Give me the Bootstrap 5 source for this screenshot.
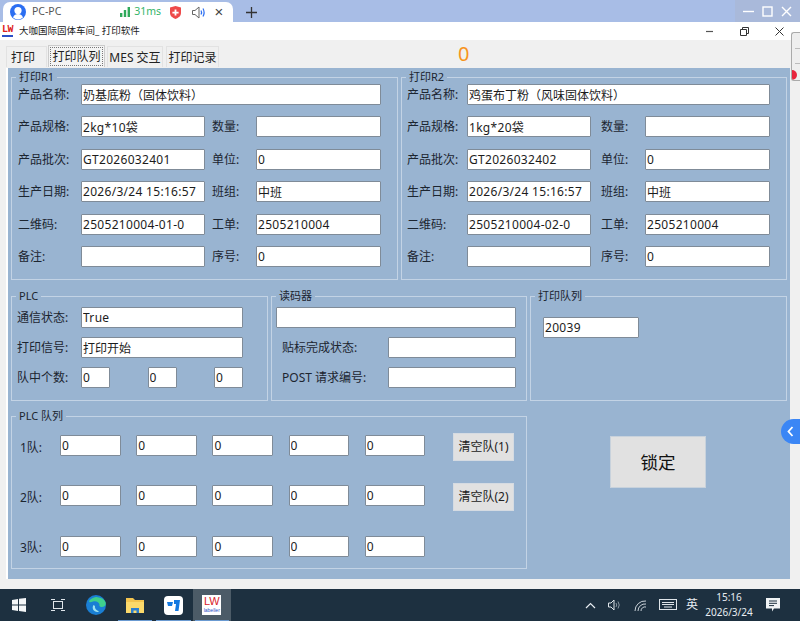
<!DOCTYPE html>
<html lang="zh-CN">

<head>
    <meta charset="UTF-8">
    <meta name="viewport" content="width=device-width, initial-scale=1.0">
    <title>大咖国际固体车间_ 打印软件</title>
    <link href="https://cdn.jsdelivr.net/npm/bootstrap@5.3.2/dist/css/bootstrap.min.css" rel="stylesheet">
    <style>
        html, body { height: 100%; overflow: hidden; }
        body {
            font-family: "Noto Sans", "Noto Sans CJK SC", sans-serif;
            font-size: 12px;
            color: #1c2530;
            background: #f0f0f0;
        }
        .shell { height: 621px; width: 800px; position: relative; }

        /* remote desktop tab bar */
        .rdp-bar { height: 22px; background: #a8bde6; padding: 2px 0 0 3px; }
        .rdp-tab { width: 230px; height: 20px; background: #fff; border-radius: 7px 7px 0 0; padding: 0 9px 0 7px; color: #555; font-size: 10.5px; }
        .rdp-ms { color: #35b56a; font-size: 10.5px; margin-left: 4px; }
        .rdp-shield { margin-left: 9px; }
        .rdp-speaker { margin-left: 11px; }
        .rdp-close { width: 10px; margin-left: 8px; font-family: "Liberation Sans", sans-serif; font-size: 15px; line-height: 18px; color: #444; text-align: center; }
        .rdp-plus { margin-left: 12px; }
        .rdp-ctrl { margin-left: auto; margin-top: -2px; width: 65px; height: 22px; background: #a9b9da; }

        /* app title */
        .app-title { height: 18px; background: #fff; font-size: 9.5px; color: #222; padding-right: 16px; }
        .lw-small { width: 15px; margin: 0 2px 0 2px; font-family: "Liberation Mono", monospace; font-size: 10px; font-weight: 700; line-height: 9px; color: #d22; letter-spacing: -.6px; }
        .lw-small::after { content: ""; display: block; width: 11px; height: 2px; margin-top: 1px; background: #2b4fc7; }
        .title-btns { gap: 26px; }

        /* tabs */
        .tab-strip { height: 28px; padding: 6px 0 0 6px; background: #f0f0f0; }
        .tab-strip .nav-link {
            height: 21px; padding: 0; margin-right: 2px;
            font-size: 12px; line-height: 21px; color: #222; text-align: center;
            background: #f0f0f0; border: 1px solid #e2e2e2; border-bottom: 0; border-radius: 0;
        }
        .tab-strip .nav-link.tab-one { width: 41px; margin-right: 1px; padding-left: 4px; text-align: left; }
        .tab-two { width: 57px; }
        .tab-strip .nav-link.tab-three { width: 56px; margin-right: 3px; }
        .tab-four { width: 53px; }
        .tab-strip .nav-link.active { height: 22px; margin-top: -1px; padding: 0 1px; color: #222; background: #f4f4f4; border-color: #ccc; }
        .tab-focus { display: block; line-height: 17px; margin-top: 1px; border: 1px dotted #777; }
        .counter { position: absolute; left: 458px; top: 41px; font-size: 20px; color: #f7941d; line-height: 26px; }

        /* main panel */
        .main-wrap { height: 511px; padding: 0 10px 0 8px; background: #f0f0f0; }
        .main-panel { height: 100%; background: #99b4d1; padding: 2px 3px 0 3px; box-shadow: -2px 0 0 #fff, 0 2px 0 #fff; }
        .grp { border: 1px solid #c3d3e5; min-width: 0; margin: 0; }
        .grp legend { float: none; width: auto; margin: 0 0 0 4px; padding: 0 3px; font-size: 11px; line-height: 14px; color: #1c2530; }
        .top-row { display: grid; grid-template-columns: 387px 386px; gap: 3px; height: 210px; }
        .mid-row { display: grid; grid-template-columns: 257px 256px 257px; gap: 3px; height: 112px; margin-top: 9px; }
        .low-row { display: grid; grid-template-columns: 516px 1fr; gap: 3px; height: 160px; margin-top: 8px; }

        .fld {
            height: 21px; padding: 0 1px; font-size: 12px; line-height: 19px; color: #1c1c1c;
            background: #fff; border: 1px solid #7f8b98; border-radius: 1px;
            font-family: "Noto Sans", "Noto Sans CJK SC", sans-serif;
        }
        .fld-lat { letter-spacing: .3px; }
        .lbl { font-size: 12px; line-height: 21px; white-space: nowrap; color: #1c2530; }

        .print-form {
            display: grid; grid-template-columns: 63px 124px 51px 125px;
            grid-auto-rows: 21px; row-gap: 11.4px; padding-left: 6px;
        }
        .print-form.second { grid-template-columns: 60px 124px 54px 125px; padding-left: 5px; }
        .wide { grid-column: 2 / span 3; }
        .second-lbl { padding-left: 7px; }
        .second .second-lbl { padding-left: 10px; }

        .plc-form { display: grid; grid-template-columns: 64px 1fr; grid-auto-rows: 21px; row-gap: 9px; padding: 4px 24px 0 5px; }
        .count-row { display: flex; justify-content: space-between; }
        .count-row .fld { width: 29px; }
        .reader-form { display: grid; grid-template-columns: 112px 128px; grid-auto-rows: 21px; row-gap: 9px; padding: 4px 0 0 4px; }
        .reader-form .lbl { padding-left: 6px; }
        .reader-form .wide-reader { grid-column: 1 / span 2; }
        .queue-box { width: 96px; margin: 14px 0 0 12px; }

        .plc-queue { display: grid; grid-template-columns: 40px 393px 61px; grid-auto-rows: 28px; row-gap: 22.4px; padding: 10px 0 0 8px; align-items: start; }
        .plc-queue .lbl { align-self: center; }
        .q-gap { display: flex; gap: 15.7px; margin-top: 2px; }
        .q-gap .fld { width: 60.5px; flex: none; }
        .clear-btn {
            width: 61px; height: 28px; padding: 0;
            font-size: 12px; color: #222; border-radius: 0;
            background: #e1e1e1; border: 1px solid #d5dbe2;
        }
        .lock-area { padding: 27px 0 0 80px; }
        .lock-btn { width: 96px; height: 52px; padding: 0; font-size: 17.5px; color: #111; background: #e1e1e1; border: 1px solid #c8d2dc; border-radius: 0; }

        /* taskbar */
        .task-strip { height: 10px; background: #f0f0f0; }
        .taskbar { height: 32px; background: #1d3040; color: #e8edf2; }
        .slot { width: 38.5px; height: 32px; position: relative; flex: none; }
        .slot.open::after { content: ""; position: absolute; left: 2px; right: 2px; bottom: 0; height: 1px; background: #6b9bd2; }
        .slot.active { background: #4c5b67; }
        .lw-logo { width: 19px; height: 20px; background: #fff; text-align: center; line-height: 1; font-family: "Liberation Sans", sans-serif; }
        .lw-logo b { display: block; font-size: 11px; color: #d9222a; line-height: 12px; font-weight: 400; }
        .lw-logo i { display: block; font-size: 5px; color: #2b4fc7; font-style: normal; line-height: 6px; }
        .tray { margin-left: auto; padding-right: 20px; }
        .tray-wide { margin-right: 12px; }
        .tray-mid { margin-right: 10px; }
        .tray-clock { width: 52px; margin: 0 11px 0 5px; font-size: 10px; line-height: 15px; text-align: center; }
        .tray-ime { margin-left: 9px; font-size: 12px; }

        /* overlays from the remote tool */
        .side-strip { position: absolute; right: 0; top: 32px; width: 9px; height: 49px; background: #eee; border: 1px solid #aaa; border-right: 0; border-radius: 3px 0 0 3px; overflow: hidden; }
        .side-dot { position: absolute; left: 0; top: 37px; width: 5px; height: 10px; background: #e8243c; border-radius: 0 5px 5px 0; }
        .side-lines { position: absolute; left: 3px; top: 15px; width: 5px; height: 16px; border-top: 1px solid #bbb; border-bottom: 1px solid #bbb; }
        .side-handle { position: absolute; right: 0; top: 419px; width: 19px; height: 25px; background: #3b86f5; border-radius: 13px 0 0 13px; }
    </style>
</head>

<body>
    <div class="shell">
        <!-- Remote desktop tab bar -->
        <div class="rdp-bar d-flex">
            <div class="rdp-tab d-flex align-items-center">
                <svg width="16" height="16" viewBox="0 0 16 16" class="flex-shrink-0" style="margin-right:6px">
                    <circle cx="8" cy="8" r="8" fill="#2b6ef2"/>
                    <circle cx="8" cy="6.6" r="3.6" fill="#fff"/>
                    <path d="M3 13.5c1-2.6 3-3.400 5-3.400s4 .8 5 3.400A8 8 0 0 1 3 13.5z" fill="#fff"/>
                </svg>
                <span>PC-PC</span>
                <svg width="10" height="10" viewBox="0 0 10 10" class="ms-auto flex-shrink-0">
                    <rect x="0" y="6" width="2.4" height="4" fill="#2eaa5a"/>
                    <rect x="3.800" y="3" width="2.400" height="7" fill="#2eaa5a"/>
                    <rect x="7.600" y="0" width="2.400" height="10" fill="#2eaa5a"/>
                </svg>
                <span class="rdp-ms">31ms</span>
                <svg width="11" height="13" viewBox="0 0 11 13" class="rdp-shield flex-shrink-0">
                    <path d="M5.500 0L11 1.600V7c0 3-2.500 4.800-5.500 6C2.500 11.800 0 10 0 7V1.600z" fill="#ee4a4a"/>
                    <path d="M4.600 3.500h1.800v2.200h2.200v1.700H6.400v2.200H4.600V7.400H2.400V5.700h2.200z" fill="#fff"/>
                </svg>
                <svg width="14" height="13" viewBox="0 0 14 13" class="rdp-speaker flex-shrink-0">
                    <path d="M.5 4.500h2.500L7 1v11L3 8.500H.5z" fill="none" stroke="#666"/>
                    <path d="M9 4.500q1.200 2 0 4" fill="none" stroke="#2b6ef2" stroke-width="1.200"/>
                    <path d="M11 2.500q2.200 4 0 8" fill="none" stroke="#2b6ef2" stroke-width="1.200"/>
                </svg>
                <span class="rdp-close">×</span>
            </div>
            <svg width="13" height="13" viewBox="0 0 13 13" class="rdp-plus mt-1">
                <path d="M6.500 1v11M1 6.500h11" stroke="#333" stroke-width="1.300"/>
            </svg>
            <div class="rdp-ctrl d-flex align-items-center justify-content-around px-1">
                <svg width="11" height="11" viewBox="0 0 11 11"><path d="M0 5.500h11" stroke="#fff" stroke-width="1.400"/></svg>
                <svg width="11" height="11" viewBox="0 0 11 11"><rect x="1" y="1" width="9" height="9" fill="none" stroke="#fff" stroke-width="1.400"/></svg>
                <svg width="11" height="11" viewBox="0 0 11 11"><path d="M1 1l9 9M10 1l-9 9" stroke="#fff" stroke-width="1.400"/></svg>
            </div>
        </div>

        <!-- App title bar -->
        <div class="app-title d-flex align-items-center">
            <span class="lw-small">LW</span>
            <span>大咖国际固体车间_ 打印软件</span>
            <div class="title-btns ms-auto d-flex align-items-center">
                <svg width="9" height="9" viewBox="0 0 9 9"><path d="M1 4.500h7" stroke="#555" stroke-width="1.200"/></svg>
                <svg width="9" height="9" viewBox="0 0 9 9"><path d="M.5 2.500h6v6h-6zM2.500 2.500v-2h6v6h-2" fill="none" stroke="#333"/></svg>
                <svg width="9" height="9" viewBox="0 0 9 9"><path d="M.5.500l8 8M8.500.500l-8 8" stroke="#333"/></svg>
            </div>
        </div>

        <!-- Tabs -->
        <ul class="nav tab-strip">
            <li class="nav-item"><a class="nav-link tab-one" href="#">打印</a></li>
            <li class="nav-item"><a class="nav-link tab-two active" href="#"><span class="tab-focus">打印队列</span></a></li>
            <li class="nav-item"><a class="nav-link tab-three" href="#">MES 交互</a></li>
            <li class="nav-item"><a class="nav-link tab-four" href="#">打印记录</a></li>
        </ul>
        <span class="counter">0</span>

        <main class="main-wrap">
            <div class="main-panel">
                <div class="top-row">
                    <fieldset class="grp">
                        <legend>打印R1</legend>
                        <div class="print-form">
                            <span class="lbl">产品名称:</span><input class="form-control fld wide" value="奶基底粉（固体饮料）">
                            <span class="lbl">产品规格:</span><input class="form-control fld fld-lat" value="2kg*10袋"><span class="lbl second-lbl">数量:</span><input class="form-control fld" value="">
                            <span class="lbl">产品批次:</span><input class="form-control fld fld-lat" value="GT2026032401"><span class="lbl second-lbl">单位:</span><input class="form-control fld" value="0">
                            <span class="lbl">生产日期:</span><input class="form-control fld fld-lat" value="2026/3/24 15:16:57"><span class="lbl second-lbl">班组:</span><input class="form-control fld" value="中班">
                            <span class="lbl">二维码:</span><input class="form-control fld fld-lat" value="2505210004-01-0"><span class="lbl second-lbl">工单:</span><input class="form-control fld fld-lat" value="2505210004">
                            <span class="lbl">备注:</span><input class="form-control fld" value=""><span class="lbl second-lbl">序号:</span><input class="form-control fld" value="0">
                        </div>
                    </fieldset>
                    <fieldset class="grp">
                        <legend>打印R2</legend>
                        <div class="print-form second">
                            <span class="lbl">产品名称:</span><input class="form-control fld wide" value="鸡蛋布丁粉（风味固体饮料）">
                            <span class="lbl">产品规格:</span><input class="form-control fld fld-lat" value="1kg*20袋"><span class="lbl second-lbl">数量:</span><input class="form-control fld" value="">
                            <span class="lbl">产品批次:</span><input class="form-control fld fld-lat" value="GT2026032402"><span class="lbl second-lbl">单位:</span><input class="form-control fld" value="0">
                            <span class="lbl">生产日期:</span><input class="form-control fld fld-lat" value="2026/3/24 15:16:57"><span class="lbl second-lbl">班组:</span><input class="form-control fld" value="中班">
                            <span class="lbl">二维码:</span><input class="form-control fld fld-lat" value="2505210004-02-0"><span class="lbl second-lbl">工单:</span><input class="form-control fld fld-lat" value="2505210004">
                            <span class="lbl">备注:</span><input class="form-control fld" value=""><span class="lbl second-lbl">序号:</span><input class="form-control fld" value="0">
                        </div>
                    </fieldset>
                </div>

                <div class="mid-row">
                    <fieldset class="grp">
                        <legend>PLC</legend>
                        <div class="plc-form">
                            <span class="lbl">通信状态:</span><input class="form-control fld fld-lat" value="True">
                            <span class="lbl">打印信号:</span><input class="form-control fld" value="打印开始">
                            <span class="lbl">队中个数:</span>
                            <div class="count-row">
                                <input class="form-control fld" value="0">
                                <input class="form-control fld" value="0">
                                <input class="form-control fld" value="0">
                            </div>
                        </div>
                    </fieldset>
                    <fieldset class="grp">
                        <legend>读码器</legend>
                        <div class="reader-form">
                            <input class="form-control fld wide-reader" value="">
                            <span class="lbl">贴标完成状态:</span><input class="form-control fld" value="">
                            <span class="lbl">POST 请求编号:</span><input class="form-control fld" value="">
                        </div>
                    </fieldset>
                    <fieldset class="grp">
                        <legend>打印队列</legend>
                        <input class="form-control fld fld-lat queue-box" value="20039">
                    </fieldset>
                </div>

                <div class="low-row">
                    <fieldset class="grp">
                        <legend>PLC 队列</legend>
                        <div class="plc-queue">
                            <span class="lbl">1队:</span>
                            <div class="q-gap">
                                <input class="form-control fld" value="0"><input class="form-control fld" value="0"><input class="form-control fld" value="0"><input class="form-control fld" value="0"><input class="form-control fld" value="0">
                            </div>
                            <button class="btn clear-btn" type="button">清空队(1)</button>
                            <span class="lbl">2队:</span>
                            <div class="q-gap">
                                <input class="form-control fld" value="0"><input class="form-control fld" value="0"><input class="form-control fld" value="0"><input class="form-control fld" value="0"><input class="form-control fld" value="0">
                            </div>
                            <button class="btn clear-btn" type="button">清空队(2)</button>
                            <span class="lbl">3队:</span>
                            <div class="q-gap">
                                <input class="form-control fld" value="0"><input class="form-control fld" value="0"><input class="form-control fld" value="0"><input class="form-control fld" value="0"><input class="form-control fld" value="0">
                            </div>
                        </div>
                    </fieldset>
                    <div class="lock-area">
                        <button class="btn lock-btn" type="button">锁定</button>
                    </div>
                </div>
            </div>
        </main>

        <div class="task-strip"></div>

        <!-- Windows taskbar -->
        <footer class="taskbar d-flex align-items-center">
            <div class="slot d-flex align-items-center justify-content-center">
                <svg width="14" height="14" viewBox="0 0 14 14"><path d="M0 2l6-1v5.500H0zM7 .8L14 0v6.500H7zM0 7.500h6V13l-6-1zM7 7.500h7V14l-7-1z" fill="#f4f6f8"/></svg>
            </div>
            <div class="slot d-flex align-items-center justify-content-center">
                <svg width="14" height="14" viewBox="0 0 14 14" fill="none" stroke="#dfe5ea"><rect x="2.500" y="3.500" width="9" height="7"/><path d="M0 1.500h4M10 1.500h4M0 12.500h4M10 12.500h4"/></svg>
            </div>
            <div class="slot d-flex align-items-center justify-content-center">
                <svg width="20" height="20" viewBox="0 0 20 20">
                    <circle cx="10" cy="10" r="10" fill="#1a7fd4"/>
                    <path d="M3 6a10 10 0 0 1 16.500 1c1 3-1 5-3.500 5-2 0-3-1-2.500-2.500C13 7 10 5.500 7 6.500 5 7 3.500 8 3 6z" fill="#3fd08c"/>
                    <path d="M7.500 10c-2 3 0 7 4 7 1 0 1.500-.5 1-1-2-.5-4-2.500-3.500-5z" fill="#9fe3f0"/>
                </svg>
            </div>
            <div class="slot open d-flex align-items-center justify-content-center">
                <svg width="18" height="17" viewBox="0 0 18 17">
                    <path d="M0 1h7l2 2h9v13H0z" fill="#f3c44f"/>
                    <path d="M0 5h18v11H0z" fill="#fbd96b"/>
                    <path d="M5 16v-5h8v5h-2.500v-2.500h-3V16z" fill="#2b7fd0"/>
                </svg>
            </div>
            <div class="slot open d-flex align-items-center justify-content-center">
                <svg width="19" height="19" viewBox="0 0 19 19">
                    <rect width="19" height="19" rx="4" fill="#fff"/>
                    <path d="M3 6h6l-1 4H4zM10 4h6l-1.500 11h-3.500l1-7h-2z" fill="#1479e0"/>
                </svg>
            </div>
            <div class="slot open active d-flex align-items-center justify-content-center">
                <div class="lw-logo"><b>LW</b><i>labeller</i></div>
            </div>
            <div class="tray d-flex align-items-center">
                <svg width="11" height="7" viewBox="0 0 11 7" class="tray-wide"><path d="M1 6l4.500-4.500L10 6" fill="none" stroke="#e8edf2" stroke-width="1.200"/></svg>
                <svg width="14" height="12" viewBox="0 0 14 12" class="tray-wide" fill="none" stroke="#dfe5ea"><path d="M.5 4h2.500L6 1v10L3 8H.5z"/><path d="M8 4q1.500 2 0 4M10 2.500q2.500 3.500 0 7" stroke="#8b98a3"/></svg>
                <svg width="15" height="13" viewBox="0 0 15 13" class="tray-mid" fill="none" stroke="#c9d1d8"><path d="M1 12A10 10 0 0 1 12 2M4 12a7 7 0 0 1 8-7M7 12a4 4 0 0 1 5-4"/></svg>
                <svg width="18" height="12" viewBox="0 0 18 12" fill="none" stroke="#dfe5ea"><rect x=".5" y=".5" width="17" height="10"/><path d="M3 3.500h12M3 5.500h12M5 8h8"/></svg>
                <span class="tray-ime">英</span>
                <div class="tray-clock">15:16<br>2026/3/24</div>
                <svg width="14" height="14" viewBox="0 0 14 14"><path d="M0 0h14v10.500H8L6 13.500v-3H0z" fill="#f0f3f5"/><path d="M3 3h8M3 5.300h8M3 7.600h5" stroke="#1d3040"/></svg>
            </div>
        </footer>

        <!-- Remote tool overlays -->
        <div class="side-strip"><span class="side-lines"></span><span class="side-dot"></span></div>
        <div class="side-handle d-flex align-items-center justify-content-center">
            <svg width="7" height="11" viewBox="0 0 7 11"><path d="M5.500 1L1.500 5.500l4 4.500" fill="none" stroke="#fff" stroke-width="1.800"/></svg>
        </div>
    </div>

    <script src="https://cdn.jsdelivr.net/npm/bootstrap@5.3.2/dist/js/bootstrap.bundle.min.js"></script>
</body>

</html>
